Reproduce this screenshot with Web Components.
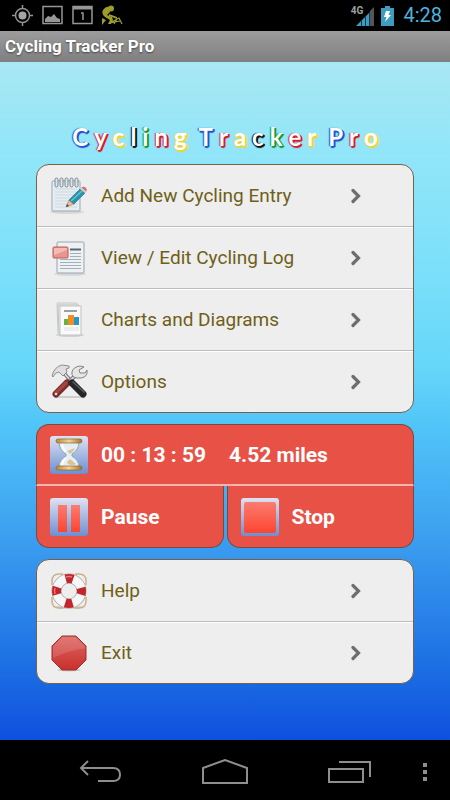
<!DOCTYPE html>
<html lang="en">
<head>
<meta charset="utf-8">
<meta name="viewport" content="width=device-width, initial-scale=1">
<title>Cycling Tracker Pro</title>
<style>
  body {
    margin: 0;
    min-height: 100vh;
    display: flex;
    flex-direction: column;
    background: #000;
    font-family: Roboto, "Noto Sans", sans-serif;
  }
  main {
    flex: 1;
    display: flex;
    flex-direction: column;
    gap: 11px;
    padding: 61px 36px 11px;
    background: linear-gradient(#a9e7f4 0%, #93e6f8 12%, #7ce0fa 30%, #66d6f9 45%, #50c4f8 54%, #3c9ff0 70%, #1e72e4 88%, #0e50de 100%);
  }
</style>
</head>
<body>
<status-bar time="4:28" network="4G"></status-bar>
<title-bar>Cycling Tracker Pro</title-bar>

<main>
  <rainbow-logo text="Cycling Tracker Pro"></rainbow-logo>

  <menu-card>
    <menu-row label="Add New Cycling Entry">
      <svg viewBox="0 0 38 38" width="38" height="38" aria-hidden="true">
        <ellipse cx="17" cy="35" rx="17" ry="2" fill="#d8d8d8"/>
        <rect x="2" y="4" width="28" height="30" rx="1" fill="#e6eef3" stroke="#9aa8b2"/>
        <path d="M5 12h22M5 15h22M5 18h22M5 21h22M5 24h22M5 27h22M5 30h22" stroke="#ccd7de"/>
        <g fill="#dde4e8" stroke="#7b8992">
          <rect x="5" y="1" width="3" height="9" rx="1.5"/><rect x="10" y="1" width="3" height="9" rx="1.5"/>
          <rect x="15" y="1" width="3" height="9" rx="1.5"/><rect x="20" y="1" width="3" height="9" rx="1.5"/>
          <rect x="25" y="1" width="3" height="9" rx="1.5"/>
        </g>
        <path d="M16 30l3-7 5 4z" fill="#e8bf91" stroke="#a27e5c" stroke-width=".6"/>
        <path d="M16 30l1-3 2 2z" fill="#444"/>
        <path d="M19 23L30 12l5 4-11 11z" fill="#2b93ab" stroke="#256f83" stroke-width=".6"/>
        <path d="M21 24L32 14" stroke="#67c1d1" stroke-width="1.5"/>
        <path d="M30 12l1.500-1.500 5 4L35 16z" fill="#c9d0d2"/>
        <path d="M31.500 10.500q2-1.500 4 0t1 4z" fill="#d46e60"/>
      </svg>
    </menu-row>
    <menu-row label="View / Edit Cycling Log">
      <svg viewBox="0 0 38 38" width="38" height="38" aria-hidden="true">
        <ellipse cx="20" cy="35" rx="16" ry="2" fill="#d8d8d8"/>
        <rect x="7" y="3" width="27" height="31" rx="1" fill="#edf1f4" stroke="#98a4b0"/>
        <path d="M20 10.500h11" stroke="#596574" stroke-width="2"/>
        <path d="M20 14.500h11M20 17.500h11M10 20.500h21M10 23.500h21M10 26.500h21M10 29.500h21" stroke="#a3afbb"/>
        <rect x="3" y="8" width="15" height="11" rx="1" fill="#e9968e" stroke="#b65c58"/>
        <path d="M4 9h13v2L4 16z" fill="#f4bbb4"/>
      </svg>
    </menu-row>
    <menu-row label="Charts and Diagrams">
      <svg viewBox="0 0 38 38" width="38" height="38" aria-hidden="true">
        <ellipse cx="20" cy="34" rx="14" ry="2" fill="#d2d2d2"/>
        <path d="M7 2h20v30H8z" fill="#e8e8e8" stroke="#c7caca"/>
        <path d="M8 4h21v29H9z" fill="#f1f1f1" stroke="#c1c4c4"/>
        <rect x="10" y="5" width="21" height="29" fill="#fafafa" stroke="#bfc3c3"/>
        <path d="M14 10h13" stroke="#9b9fa4" stroke-width="2"/>
        <rect x="14" y="18" width="4" height="6" fill="#66b341"/>
        <rect x="18" y="14" width="6" height="10" fill="#ee8e25"/>
        <rect x="24" y="16" width="5" height="8" fill="#2a93ca"/>
        <path d="M14 27h15M14 29h15" stroke="#e0e0e0"/>
      </svg>
    </menu-row>
    <menu-row label="Options">
      <svg viewBox="0 0 38 38" width="38" height="38" aria-hidden="true">
        <path d="M5 34h30" stroke="#cecece" stroke-width="2"/>
        <path d="M14 10L26 24" stroke="#777" stroke-width="3.500"/>
        <path d="M14 10L26 24" stroke="#e0e0e0" stroke-width="1.500"/>
        <path d="M25 13L14 23" stroke="#777" stroke-width="4"/>
        <path d="M25 13L14 23" stroke="#d8d8d8" stroke-width="2"/>
        <path d="M2 13Q4 4 12 2l7 1v2l-3 1 1 3-4 4-4-4Q5 9 3 14z" fill="#dedede" stroke="#777" stroke-width=".8"/>
        <path d="M27 15q-6-1-5-6t8-6l4 1-5 3 1 3 5 0 2-3q1 7-6 8z" fill="#e5e5e5" stroke="#777" stroke-width=".9"/>
        <path d="M6 31L17 20" stroke="#762e2b" stroke-width="7" stroke-linecap="round"/>
        <path d="M6 30L16 20" stroke="#a8443f" stroke-width="3.500" stroke-linecap="round"/>
        <path d="M22 20L33 31" stroke="#242628" stroke-width="7" stroke-linecap="round"/>
        <path d="M23 19L34 29" stroke="#5c6063" stroke-width="1.500" stroke-linecap="round"/>
        <circle cx="6" cy="31" r="1.300" fill="#ddd"/>
      </svg>
    </menu-row>
  </menu-card>

  <ride-tracker elapsed="00 : 13 : 59" distance="4.52 miles"></ride-tracker>

  <menu-card>
    <menu-row label="Help">
      <svg viewBox="0 0 38 38" width="38" height="38" aria-hidden="true">
        <ellipse cx="19" cy="35" rx="13" ry="2" fill="#d2d2d2"/>
        <path d="M13 2H9Q2 2 2 9v4M25 2h4q7 0 7 7v4M13 36H9q-7 0-7-7v-4M25 36h4q7 0 7-7v-4" fill="none" stroke="#cdb08a" stroke-width="1.500"/>
        <circle cx="19" cy="19" r="12.500" fill="none" stroke="#a8a8a8" stroke-width="10"/>
        <circle cx="19" cy="19" r="12.500" fill="none" stroke="#f6f6f6" stroke-width="8.500"/>
        <circle cx="19" cy="19" r="12.500" fill="none" stroke="#c4252b" stroke-width="9" stroke-dasharray="7.500 12.135" stroke-dashoffset="3.750"/>
        <path d="M16 5q3-1 6 0M5 16q-1 3 0 6" fill="none" stroke="#e8777a" stroke-width="1.500"/>
      </svg>
    </menu-row>
    <menu-row label="Exit">
      <svg viewBox="0 0 38 38" width="38" height="38" aria-hidden="true">
        <defs>
          <linearGradient id="exit-red" x2="0" y2="1">
            <stop offset="0" stop-color="#dd6661"/><stop offset="1" stop-color="#c9302c"/>
          </linearGradient>
        </defs>
        <ellipse cx="19" cy="36" rx="12" ry="1.500" fill="#c8c8c8"/>
        <path d="M12 2h14l10 10v14L26 36H12L2 26V12z" fill="url(#exit-red)" stroke="#98302f"/>
        <path d="M12.500 3h13l9.500 9.500v2Q22 15 3 24V12.500z" fill="#fff" opacity=".12"/>
      </svg>
    </menu-row>
  </menu-card>
</main>

<nav-bar></nav-bar>

<script>
class StatusBar extends HTMLElement {

    constructor() {
        super();
        this.attachShadow({ mode: 'open' });
    }

    connectedCallback() {
        this.shadowRoot.innerHTML = `
        <style>
          :host {
            display: flex;
            align-items: center;
            height: 31px;
            padding: 0 8px 0 12px;
            background: #000;
            color: #4db4dc;
          }
          .notifications {
            display: flex;
            flex: 1;
            gap: 9px;
          }
          .network {
            align-self: flex-start;
            padding-top: 5px;
            color: #a0a0a0;
            font-size: 10px;
            font-weight: bold;
            line-height: 12px;
          }
          .signal { margin-right: 7px; margin-left: -7px; }
          .battery { margin-right: 9px; }
          time { font-size: 20px; line-height: 31px; }
        </style>
        <div class="notifications">
          <svg width="21" height="21" viewBox="0 0 21 21" fill="none" stroke="#929292" stroke-width="1.500">
            <circle cx="10.500" cy="10.500" r="7"/>
            <circle cx="10.500" cy="10.500" r="4" fill="#a4a4a4" stroke="none"/>
            <path d="M10.500 0v4M10.500 17v4M0 10.500h4M17 10.500h4"/>
          </svg>
          <svg width="21" height="21" viewBox="0 0 21 21">
            <rect x="1" y="1.500" width="19" height="17" fill="none" stroke="#969696" stroke-width="1.500"/>
            <path d="M3 17v-3l3-3 3 1 3-3 3 4 3 1v3z" fill="#969696"/>
          </svg>
          <svg width="21" height="21" viewBox="0 0 21 21">
            <rect x="1" y="1.500" width="19" height="17" fill="none" stroke="#969696" stroke-width="1.500"/>
            <path d="M1 3h19" stroke="#969696" stroke-width="3"/>
            <path d="M9 8h2v7" fill="none" stroke="#969696" stroke-width="1.500"/>
          </svg>
          <svg width="21" height="21" viewBox="0 0 21 21" fill="#9c9e2b">
            <circle cx="9" cy="3.500" r="3"/>
            <path d="M1 5q3-4 6-3l1 5-3 3 5 2 1 3-2 4H6l2-4-5-3Q-1 9 1 5z"/>
            <path d="M0 13l4 2-4 5zM7 9l8 3v2L7 11z"/>
            <path d="M8 18l9-5 3 6M12 19l3-5M18 16l-11 2" fill="none" stroke="#9c9e2b" stroke-width="1.200"/>
          </svg>
        </div>
        <span class="network">${this.getAttribute('network')}</span>
        <svg class="signal" width="18" height="20" viewBox="0 0 18 20">
          <path d="M0 20L14 6v14z" fill="#3f9cc1"/>
          <path d="M14 5l4-4v19h-4z" fill="#555"/>
          <path d="M5.500 14v6M9.500 10v10M13.500 6v14" stroke="#153a49"/>
        </svg>
        <svg class="battery" width="13" height="20" viewBox="0 0 13 20">
          <path d="M0 2h4V0h5v2h4v18H0z" fill="#3f9cc1"/>
          <path d="M5 5h4L7.500 9H10l-6 7 1.500-5H3z" fill="#fff"/>
        </svg>
        <time>${this.getAttribute('time')}</time>
      `;
    }
}

class TitleBar extends HTMLElement {

    constructor() {
        super();
        this.attachShadow({ mode: 'open' }).innerHTML = `
        <style>
          :host {
            display: block;
            padding: 0 5px;
            background: linear-gradient(#9c9c9c, #7f7f7f);
            color: #fff;
            text-shadow: 0 1px 2px #444;
          }
          h1 {
            margin: 0;
            font-size: 17px;
            line-height: 31px;
          }
        </style>
        <h1><slot></slot></h1>
      `;
    }
}

class RainbowLogo extends HTMLElement {

    constructor() {
        super();
        this.attachShadow({ mode: 'open' });
    }

    connectedCallback() {
        const colors = ['#2452cc', '#dc1926', '#ecd437', '#101010', '#169a28', '#dc1926', '#ecd437', '',
            '#2452cc', '#dc1926', '#ecd437', '#101010', '#169a28', '#dc1926', '#ecd437', '',
            '#2452cc', '#dc1926', '#ecd437'];
        const letters = [...this.getAttribute('text')].map((letter, i) =>
            letter === ' ' ? ' ' : `<span style="--ink: ${colors[i]}">${letter}</span>`).join('');

        this.shadowRoot.innerHTML = `
        <style>
          :host {
            display: block;
            margin-bottom: 2px;
            text-align: center;
          }
          h2 {
            margin: 0;
            font: bold 24px/28px Lato, sans-serif;
          }
          /* white face with a coloured edge that is heaviest at the lower right */
          span {
            padding: 0 3px;
            color: #fff;
            text-shadow: 1px 1px 0 var(--ink), 2px 1px 0 var(--ink), 1px 2px 1px var(--ink), -1px 0 1px var(--ink);
          }
        </style>
        <h2>${letters}</h2>
      `;
    }
}

class MenuCard extends HTMLElement {

    constructor() {
        super();
        this.attachShadow({ mode: 'open' }).innerHTML = `
        <style>
          :host {
            display: block;
            overflow: hidden;
            border: 1px solid #7a6048;
            border-radius: 13px;
            background: #eee;
          }
          ::slotted(:not(:first-child)) {
            border-top: 1px solid #bcbcbc;
            box-shadow: inset 0 1px #fff;
          }
        </style>
        <slot></slot>
      `;
    }
}

class MenuRow extends HTMLElement {

    constructor() {
        super();
        this.attachShadow({ mode: 'open' });
    }

    connectedCallback() {
        this.shadowRoot.innerHTML = `
        <style>
          :host { display: block; }
          button {
            display: flex;
            align-items: center;
            gap: 13px;
            width: 100%;
            height: 61px;
            padding: 0 52px 0 13px;
            border: 0;
            background: none;
            color: #6f5f17;
            font: 19px/24px Roboto, sans-serif;
            text-align: left;
            cursor: pointer;
          }
          .label { flex: 1; }
        </style>
        <button type="button">
          <slot></slot>
          <span class="label">${this.getAttribute('label')}</span>
          <svg width="10" height="16" viewBox="0 0 10 16" aria-hidden="true">
            <path d="M2 2.500L7.500 8 2 13.500" fill="none" stroke="#6e6e6e" stroke-width="3.200" stroke-linecap="round"/>
          </svg>
        </button>
      `;
    }
}

class RideTracker extends HTMLElement {

    constructor() {
        super();
        this.attachShadow({ mode: 'open' });
    }

    connectedCallback() {
        this.shadowRoot.innerHTML = `
        <style>
          :host {
            display: block;
            color: #fff;
            font-size: 21px;
            font-weight: bold;
            line-height: 24px;
          }
          .panel {
            display: flex;
            align-items: center;
            gap: 13px;
            box-sizing: border-box;
            height: 62px;
            padding: 0 13px;
            border: 1px solid #7c4a3c;
            background: #e85146;
          }
          .readout {
            border-bottom: 2px solid #f3b5ad;
            border-radius: 13px 13px 0 0;
          }
          .readout output + output { margin-left: 10px; }
          .controls {
            display: grid;
            grid-template-columns: 1fr 1fr;
            gap: 3px;
          }
          .controls .panel {
            border-top: 0;
            border-radius: 0 0 13px 13px;
            color: inherit;
            font: inherit;
            cursor: pointer;
          }
        </style>
        <svg width="0" height="0" style="position: absolute" aria-hidden="true">
          <defs>
            <linearGradient id="tile" x2="0" y2="1">
              <stop offset="0" stop-color="#dfe2f2"/><stop offset="1" stop-color="#6c8fd2"/>
            </linearGradient>
            <linearGradient id="red" x2="0" y2="1">
              <stop offset="0" stop-color="#fb7c70"/><stop offset="1" stop-color="#fd4530"/>
            </linearGradient>
            <linearGradient id="wood" x2="1" y2="0">
              <stop offset="0" stop-color="#b98535"/><stop offset=".5" stop-color="#f1d595"/><stop offset="1" stop-color="#a97129"/>
            </linearGradient>
          </defs>
        </svg>
        <div class="panel readout">
          <svg width="38" height="38" viewBox="0 0 38 38" aria-hidden="true">
            <rect width="38" height="38" rx="3" fill="url(#tile)"/>
            <path d="M9 6h20q0 8-7 12v2q7 4 7 11H9q0-7 7-11v-2Q9 14 9 6z" fill="#e4eff5" stroke="#8ea5b5"/>
            <path d="M12 8q1 6 4 8M12 29q1-5 4-7" fill="none" stroke="#fff" stroke-width="2"/>
            <path d="M17 15l8-3q-1 3-5 6zM17 26l3-3 6 5q-4 2-8 0z" fill="#dcc293"/>
            <rect x="6" y="3" width="26" height="4" rx="2" fill="url(#wood)" stroke="#8d6630" stroke-width=".7"/>
            <rect x="6" y="30" width="26" height="4" rx="2" fill="url(#wood)" stroke="#8d6630" stroke-width=".7"/>
          </svg>
          <output>${this.getAttribute('elapsed')}</output>
          <output>${this.getAttribute('distance')}</output>
        </div>
        <div class="controls">
          <button type="button" class="panel">
            <svg width="38" height="38" viewBox="0 0 38 38" aria-hidden="true">
              <rect width="38" height="38" rx="3" fill="url(#tile)"/>
              <path d="M8 7h9v27H8zM21 7h9v27h-9z" fill="url(#red)"/>
            </svg>
            Pause
          </button>
          <button type="button" class="panel">
            <svg width="38" height="38" viewBox="0 0 38 38" aria-hidden="true">
              <rect width="38" height="38" rx="3" fill="url(#tile)"/>
              <rect x="3" y="4" width="32" height="31" rx="2" fill="url(#red)"/>
            </svg>
            Stop
          </button>
        </div>
      `;
    }
}

class NavBar extends HTMLElement {

    constructor() {
        super();
        this.attachShadow({ mode: 'open' }).innerHTML = `
        <style>
          :host {
            display: block;
            background: #000;
          }
          nav {
            display: grid;
            grid-template-columns: 38px 1fr 1fr 1fr 38px;
            align-items: center;
            height: 60px;
          }
          button {
            display: grid;
            place-items: center;
            height: 60px;
            padding: 4px 0 0;
            border: 0;
            background: none;
          }
          svg {
            fill: none;
            stroke: #8e8e8e;
            stroke-width: 2;
          }
          button:first-child { grid-column: 2; }
          button:last-child { width: 26px; }
        </style>
        <nav>
          <button type="button" aria-label="Back">
            <svg width="42" height="24" viewBox="0 0 42 24"><path d="M9 1L2 8l7 7M2 8h32q7 0 7 6.500T34 21H19"/></svg>
          </button>
          <button type="button" aria-label="Home">
            <svg width="46" height="26" viewBox="0 0 46 26"><path d="M1 24V9L23 1l22 8v15z"/></svg>
          </button>
          <button type="button" aria-label="Recent apps">
            <svg width="44" height="24" viewBox="0 0 44 24"><path d="M1 9h34v13H1zM11 2h31v15"/></svg>
          </button>
          <button type="button" aria-label="Menu">
            <svg width="4" height="20" viewBox="0 0 4 20"><path d="M2 1v4M2 8v4M2 15v4" stroke-width="4"/></svg>
          </button>
        </nav>
      `;
    }
}

customElements.define('status-bar', StatusBar);
customElements.define('title-bar', TitleBar);
customElements.define('rainbow-logo', RainbowLogo);
customElements.define('menu-card', MenuCard);
customElements.define('menu-row', MenuRow);
customElements.define('ride-tracker', RideTracker);
customElements.define('nav-bar', NavBar);
</script>
</body>
</html>
